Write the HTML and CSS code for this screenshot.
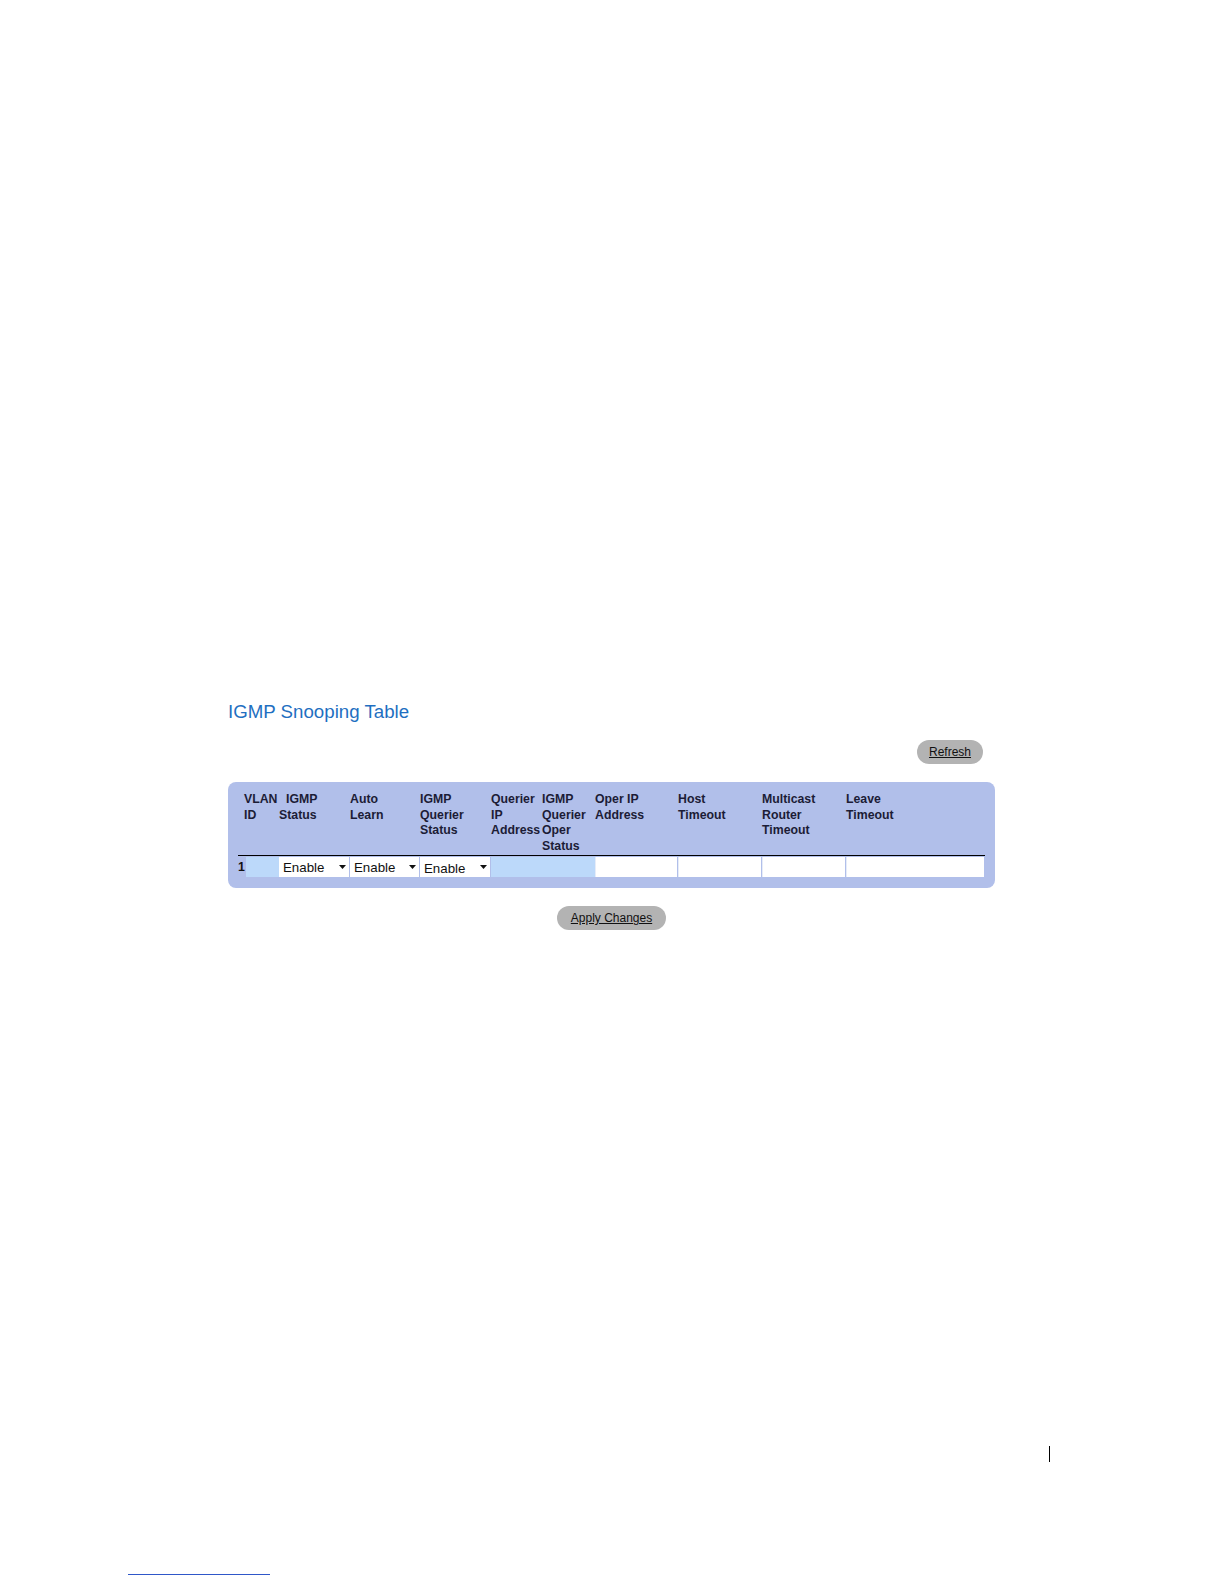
FILE: index.html
```html
<!DOCTYPE html>
<html>
<head>
<meta charset="utf-8">
<title>IGMP Snooping Table</title>
<link rel="stylesheet" href="styles.css">
</head>
<body>
<div class="page">
  <div class="panel">
    <h1 class="title">IGMP Snooping Table</h1>
    <div class="toolbar">
      <span class="btn btn-refresh">Refresh</span>
    </div>
    <div class="tablebox">
      <table class="grid">
        <colgroup>
          <col class="c1"><col class="c2"><col class="c3"><col class="c4"><col class="c5">
          <col class="c6"><col class="c7"><col class="c8"><col class="c9"><col class="c10">
        </colgroup>
        <thead>
          <tr>
            <th class="first">VLAN<br>ID</th>
            <th><span class="indent">IGMP</span><br>Status</th>
            <th>Auto<br>Learn</th>
            <th>IGMP<br>Querier<br>Status</th>
            <th>Querier<br>IP<br>Address</th>
            <th>IGMP<br>Querier<br>Oper<br>Status</th>
            <th>Oper IP<br>Address</th>
            <th>Host<br>Timeout</th>
            <th>Multicast<br>Router<br>Timeout</th>
            <th>Leave<br>Timeout</th>
          </tr>
        </thead>
        <tbody>
          <tr>
            <td class="idcell"><span class="rownum">1</span><span class="ro"></span></td>
            <td><div class="sel"><span>Enable</span><svg class="arr" width="7" height="4" viewBox="0 0 7 4"><path d="M0 0H7L3.5 4Z" fill="#111"/></svg></div></td>
            <td><div class="sel"><span>Enable</span><svg class="arr" width="7" height="4" viewBox="0 0 7 4"><path d="M0 0H7L3.5 4Z" fill="#111"/></svg></div></td>
            <td><div class="sel sel-low"><span>Enable</span><svg class="arr" width="7" height="4" viewBox="0 0 7 4"><path d="M0 0H7L3.5 4Z" fill="#111"/></svg></div></td>
            <td class="ro-cell"></td>
            <td class="ro-cell"></td>
            <td><div class="field"></div></td>
            <td><div class="field"></div></td>
            <td><div class="field"></div></td>
            <td><div class="field"></div></td>
          </tr>
        </tbody>
      </table>
    </div>
    <div class="actions">
      <span class="btn btn-apply">Apply Changes</span>
    </div>
  </div>
  <div class="footer">
    <div class="pagebar"></div>
    <div class="footline"></div>
  </div>
</div>
</body>
</html>
```

FILE: styles.css
```css
html, body {
  margin: 0;
  padding: 0;
  background: #ffffff;
}

.page {
  width: 1224px;
  height: 1584px;
  overflow: hidden;
  background: #ffffff;
  font-family: "Liberation Sans", Arial, sans-serif;
}

.panel {
  margin-left: 228px;
  width: 767px;
  padding-top: 701px;
}

.title {
  margin: 0;
  font-size: 18.7px;
  line-height: 22px;
  height: 22px;
  font-weight: normal;
  color: #1f6fc1;
}

.toolbar {
  display: flex;
  justify-content: flex-end;
  padding-right: 12px;
  margin-top: 17px;
  height: 24px;
}

.btn {
  display: inline-flex;
  align-items: center;
  justify-content: center;
  background: #b3b3b3;
  color: #111;
  font-size: 12px;
  text-decoration: underline;
  border-radius: 12px;
  height: 24px;
  box-sizing: border-box;
}

.btn-refresh {
  width: 66px;
}

.tablebox {
  margin-top: 18px;
  background: #b1bfea;
  border-radius: 8px;
  padding: 10px 10px 11px 10px;
  height: 106px;
  box-sizing: border-box;
}

.grid {
  border-collapse: collapse;
  table-layout: fixed;
  width: 747px;
}

.c1 { width: 41px; }
.c2 { width: 71px; }
.c3 { width: 70px; }
.c4 { width: 71px; }
.c5 { width: 51px; }
.c6 { width: 53px; }
.c7 { width: 83px; }
.c8 { width: 84px; }
.c9 { width: 84px; }
.c10 { width: 139px; }

.grid th {
  text-align: left;
  vertical-align: top;
  font-size: 12.3px;
  line-height: 15.5px;
  font-weight: bold;
  color: #1c1c36;
  padding: 0 0 1px 0;
  height: 62px;
  border-bottom: 1.5px solid #000;
  white-space: nowrap;
}

.grid th.first {
  padding-left: 6px;
}

.indent {
  padding-left: 7px;
}

.grid td {
  padding: 1px 0 0 0;
  height: 20px;
  vertical-align: top;
}

.idcell {
  display: flex;
  align-items: stretch;
}

.rownum {
  font-size: 12.3px;
  font-weight: bold;
  color: #111;
  width: 8px;
  line-height: 20px;
}

.ro {
  flex: 1;
  background: #bcd9fa;
  height: 20px;
}

.ro-cell {
  background: #bcd9fa;
  background-clip: content-box;
}

.sel {
  background: #ffffff;
  height: 20px;
  margin-right: 1px;
  display: flex;
  align-items: center;
  justify-content: space-between;
  padding: 0 3px 0 4px;
  font-size: 13.3px;
  color: #111;
  box-sizing: border-box;
}

.sel-low span {
  position: relative;
  top: 1px;
}

.arr {
  display: block;
}

.field {
  background: #ffffff;
  height: 20px;
  margin-right: 1px;
  border-left: 1px solid #e6ecf8;
  box-sizing: border-box;
}

.actions {
  display: flex;
  justify-content: center;
  margin-top: 18px;
  height: 24px;
}

.btn-apply {
  width: 109px;
  height: 24px;
}

.footer {
  padding-top: 516px;
}

.pagebar {
  margin-left: 1049px;
  width: 1px;
  height: 16px;
  background: #000;
}

.footline {
  margin-top: 112px;
  margin-left: 128px;
  width: 142px;
  height: 1px;
  background: #2f57c9;
}
```
